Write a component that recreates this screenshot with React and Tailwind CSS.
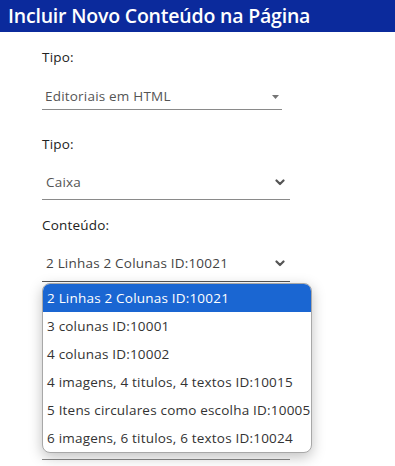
import React from "react";

const font = { fontFamily: '"Open Sans", "Noto Sans", sans-serif' };

function Triangle() {
  return (
    <svg width="7" height="4" viewBox="0 0 7 4" className="shrink-0">
      <path d="M0 0 L7 0 L3.5 4 Z" fill="#757575" />
    </svg>
  );
}

function Chevron() {
  return (
    <svg width="10" height="7" viewBox="0 0 10 7" className="shrink-0">
      <path d="M1.5 1.5 L5 5 L8.5 1.5" fill="none" stroke="#555" strokeWidth="2.2" strokeLinecap="round" strokeLinejoin="round" />
    </svg>
  );
}

const items = [
  "2 Linhas 2 Colunas ID:10021",
  "3 colunas ID:10001",
  "4 colunas ID:10002",
  "4 imagens, 4 titulos, 4 textos ID:10015",
  "5 Itens circulares como escolha ID:10005",
  "6 imagens, 6 titulos, 6 textos ID:10024",
];

const txt = "text-[13.5px] tracking-[0.2px]";

export default function App() {
  return (
    <div className="w-[395px] h-[466px] bg-white overflow-hidden" style={font}>
      <div className="h-[32px] bg-[#0b2a9c] flex items-center pl-[8px]">
        <span className="text-white text-[19.5px] font-semibold leading-none tracking-[-0.2px]">
          Incluir Novo Conteúdo na Página
        </span>
      </div>
      <div className="pl-[42px] flex flex-col">
        <div className={"mt-[15px] h-[20px] leading-[20px] text-[#222] " + txt}>Tipo:</div>
        <div className="mt-[17px] w-[240px] h-[26px] border-b border-[#8a8a8a] flex items-center justify-between pl-[3px] pr-[3px]">
          <span className={"text-[#555] " + txt}>Editoriais em HTML</span>
          <Triangle />
        </div>
        <div className={"mt-[24px] h-[20px] leading-[20px] text-[#222] " + txt}>Tipo:</div>
        <div className="mt-[11px] w-[248px] h-[35px] border-b border-[#8a8a8a] flex items-center justify-between pl-[4px] pr-[5px]">
          <span className={"text-[#555] " + txt}>Caixa</span>
          <Chevron />
        </div>
        <div className={"mt-[15px] h-[20px] leading-[20px] text-[#222] " + txt}>Conteúdo:</div>
        <div className="relative">
          <div className="mt-[10px] w-[248px] h-[37px] border-b border-[#555] flex items-center justify-between pl-[4px] pr-[5px]">
            <span className={"text-[#444] " + txt}>2 Linhas 2 Colunas ID:10021</span>
            <Chevron />
          </div>
          <div className="mt-[140px] w-[248px] h-[38px] border-b border-[#8a8a8a]"></div>
          <div className="absolute left-0 top-[48px] w-[270px] bg-white border border-[#a8a8a8] rounded-[8px] overflow-hidden shadow-[0_4px_14px_rgba(0,0,0,0.25)]">
            {items.map((t, i) => (
              <div
                key={t}
                className={
                  "h-[28px] flex items-center pl-[4px] whitespace-nowrap " + txt + " " +
                  (i === 0 ? "bg-[#1a66d2] text-white" : "text-[#333]")
                }
              >
                {t}
              </div>
            ))}
          </div>
        </div>
      </div>
    </div>
  );
}
